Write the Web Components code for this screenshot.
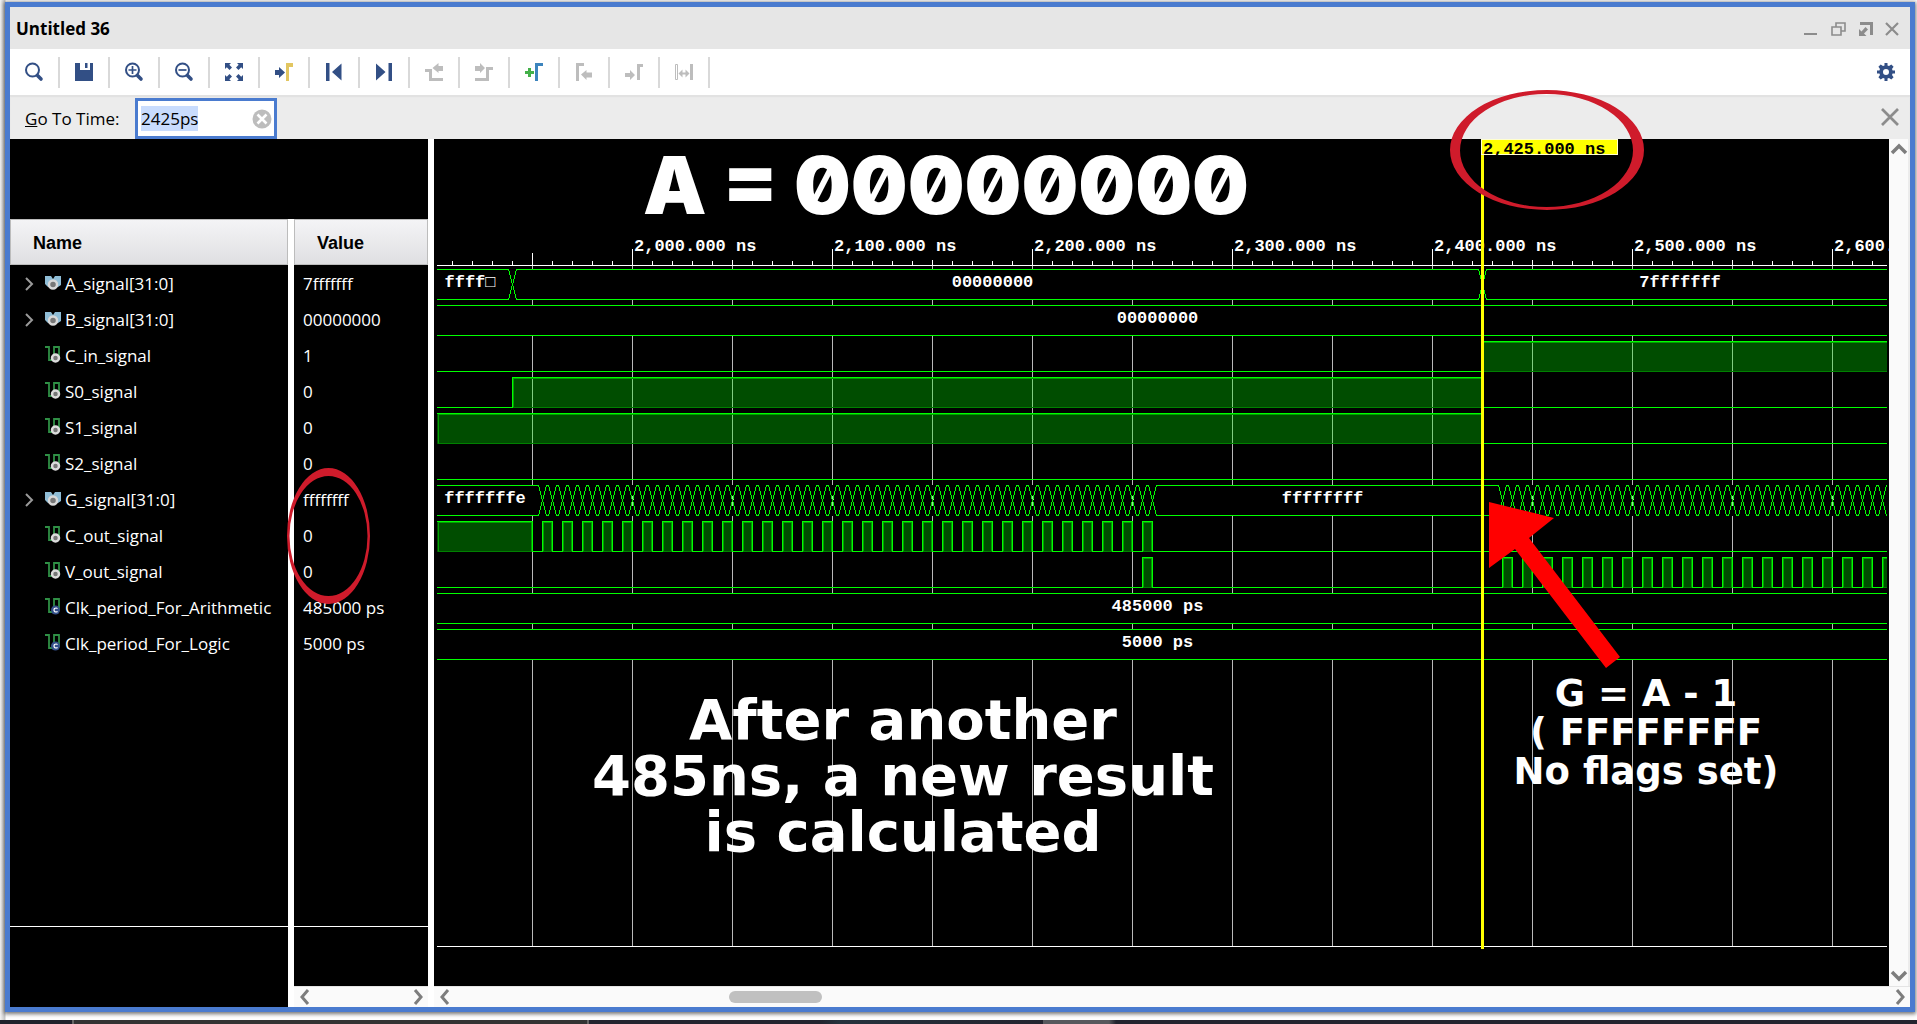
<!DOCTYPE html>
<html lang="en">
<head>
<meta charset="utf-8">
<title>Untitled 36</title>
<style>
  html, body { height: 100%; }
  body { margin: 0; font-family: "Open Sans", "Noto Sans", sans-serif; font-size: 17px; color: #000; }
</style>
</head>
<body>
<sim-desktop>
  <sim-window heading="Untitled 36">
    <sim-toolbar slot="toolbar"></sim-toolbar>
    <goto-bar slot="goto" value="2425ps"></goto-bar>
    <signal-table></signal-table>
    <wave-view></wave-view>
  </sim-window>
  <note-layer slot="notes"></note-layer>
</sim-desktop>

<script>
const define = (name, html, setup) => {
  const tpl = document.createElement('template');
  tpl.innerHTML = html;
  customElements.define(name, class extends HTMLElement {
    connectedCallback() {
      if (this.shadowRoot) return;
      const root = this.attachShadow({ mode: 'open' });
      root.append(tpl.content.cloneNode(true));
      if (setup) setup(this, root);
    }
  });
};

/* ---------- icons ---------- */
const N = '#324f85', G = '#bdbdbd', W = '#8c8c8c';
const lens = `<circle cx="8.500" cy="8" r="6.500" fill="none" stroke="${N}" stroke-width="2"/><path d="M13.500 13.500l3.500 3.500" stroke="${N}" stroke-width="3.600" stroke-linecap="round"/>`;
const ICONS = {
  search: lens,
  save: `<path fill="${N}" d="M1 1h5v7h10V1h3v18H1zM11 1h2.500v5H11z"/>`,
  zoomin: lens + `<path d="M4.500 8h8M8.500 4v8" stroke="${N}" stroke-width="1.700"/>`,
  zoomout: lens + `<path d="M4.500 8h8" stroke="${N}" stroke-width="1.700"/>`,
  fit: `<g fill="${N}"><path d="M1 1h6L5.300 2.800 8 5.500 5.500 8 2.800 5.300 1 7z"/><path d="M19 1h-6l1.700 1.800L12 5.500 14.500 8l2.700-2.700L19 7z"/><path d="M1 19h6l-1.700-1.800L8 14.500 5.500 12l-2.700 2.700L1 13z"/><path d="M19 19h-6l1.700-1.800-2.700-2.700 2.500-2.500 2.700 2.700L19 13z"/></g><path d="M1 10h18M10 1v18" stroke="#fff" stroke-width="2"/>`,
  cursor: `<path fill="${N}" d="M1 8h4V5l6 5.500L5 16v-3H1z"/><path fill="#e2c661" d="M12 1h7v4h-4v14h-3z"/>`,
  prev: `<path fill="${N}" d="M2 1h3.500v18H2zM17.500 1.500v17L8 10z"/>`,
  next: `<path fill="${N}" d="M18 1h-3.500v18H18zM2 1.500v17L11.500 10z"/>`,
  prevedge: `<path fill="${G}" d="M1 7h7v9h11v3H5v-9H1zM8.500 6l6-5v3H19v5h-4.500v2z"/>`,
  nextedge: `<path fill="${G}" d="M19 5h-7v11H1v3h14V8h4zM11 6L6 1v3H1v5h5v2z"/>`,
  add: `<path fill="#43b049" d="M1 9h3V6h3v3h3v3H7v3H4v-3H1z"/><path fill="#3c84bd" d="M11 1h8v3h-5v15h-3z"/>`,
  prevmark: `<path fill="${G}" d="M2 1h8v3H5v15H2zM7 12.500L12.500 8v2.500H18v5h-5.500V18z"/>`,
  nextmark: `<path fill="${G}" d="M19 2h-6v16h3V5h3zM11 13L6 8v3H1v4h5v3z"/>`,
  swap: `<path fill="none" stroke="${G}" d="M1.500 2.500h2v15h-2z"/><path fill="${G}" d="M16 2h3v16h-3zM4.500 11.500l4-4v3h3v-3l4 4-4 4v-3h-3v3z"/>`,
  gear: `<path fill="${N}" fill-rule="evenodd" d="M8.500 1h3v2.500l1.500.6 2.300-1.700 2.300 2.300L16 7l.6 1.500H19v3h-2.400L16 13l1.600 2.300-2.300 2.300L13 16l-1.500.6V19h-3v-2.400L7 16l-2.300 1.600-2.300-2.300L4 13l-.6-1.500H1v-3h2.400L4 7 2.400 4.700l2.300-2.300L7 4.100l1.500-.6zM10 7a3 3 0 1 0 0 6 3 3 0 0 0 0-6z"/>`,
  min: `<path fill="${W}" d="M3 14h13v2H3z"/>`,
  restore: `<path fill="none" stroke="${W}" stroke-width="1.600" d="M8 8V4h9v8h-4M4 8h9v8H4z"/>`,
  float: `<path fill="${W}" d="M5 3h13v13h-3V6H5zM4 17V10l2.500 2.500L10.500 8l2.500 2.500L9 14.500 11.500 17z"/>`,
  close: `<path stroke="${W}" stroke-width="2.200" d="M4 4l12 12M16 4L4 16"/>`,
  bigclose: `<path stroke="${W}" stroke-width="2.700" d="M2 2l16 16M18 2L2 18"/>`,
  clear: `<circle cx="10" cy="10" r="9.500" fill="#bdbdbd"/><path stroke="#fff" stroke-width="2.600" d="M5.500 5.500l9 9M14.500 5.500l-9 9"/>`,
  left: `<path fill="none" stroke="#7d7d7d" stroke-width="3" d="M14 3l-6 7 6 7"/>`,
  right: `<path fill="none" stroke="#7d7d7d" stroke-width="3" d="M7 3l6 7-6 7"/>`,
  up: `<path fill="none" stroke="#7d7d7d" stroke-width="3.500" d="M3 14l7-7 7 7"/>`,
  down: `<path fill="none" stroke="#7d7d7d" stroke-width="3.500" d="M3 6l7 7 7-7"/>`,
  expand: `<path fill="none" stroke="#9a9a9a" stroke-width="2" d="M7 4l6 6-6 6"/>`,
  bus: `<path fill="#8fbdd6" d="M2 2h6l2 3 2-3h6v9l-3 2H5l-3-3z"/><circle cx="10" cy="10.500" r="4" fill="#777" stroke="#d8d8d8" stroke-width="2.500"/>`,
  wire: `<path fill="none" stroke="#2f8f45" stroke-width="1.800" d="M2 1h4v13h5V1h5v12"/><circle cx="12.500" cy="12" r="3.500" fill="#777" stroke="#dcdcdc" stroke-width="2.500"/>`,
  param: `<path fill="none" stroke="#2f8f45" stroke-width="1.800" d="M2 1h4v13h5V1h5v12"/><circle cx="12.500" cy="12" r="4.500" fill="#34508a"/><path fill="none" stroke="#fff" stroke-width="1.200" d="M14.500 10.700a2 2 0 1 0 0 2.600"/>`
};
define('sim-icon', `<style>:host{display:block;width:20px;height:20px;flex:none}svg{display:block}</style>`,
  (el, root) => {
    root.innerHTML += `<svg width="20" height="20" viewBox="0 0 20 20" aria-hidden="true">${ICONS[el.getAttribute('name')]}</svg>`;
  });

/* ---------- shell ---------- */
define('sim-desktop', `<style>
  :host{display:flex;flex-direction:column;height:100vh;box-sizing:border-box;position:relative;overflow:hidden;
    background:linear-gradient(90deg,#f4f4f4,#c4c4c4 5px,#fff 6px)}
  main{flex:1;min-height:0;display:flex;flex-direction:column;padding:2px 2px 8px 5px}
  footer{height:4px;background:linear-gradient(90deg,#1f212b 72px,#666 72px 74px,#333 74px 587px,#666 587px 589px,#23242f 589px 820px,#25323d 840px,#23242f 1043px,#57585d 1043px 1109px,#23242f 1116px)}
</style><main><slot></slot></main><footer></footer><slot name="notes"></slot>`);

define('sim-window', `<style>
  :host{flex:1;min-height:0;display:flex;flex-direction:column;border:5px solid #4a7bcf;background:#fff;
    box-shadow:0 1px 4px 1px rgba(0,0,0,.55)}
  header{display:flex;align-items:center;gap:7px;box-sizing:border-box;height:42px;padding:2px 8px 0 6px;background:#e6e6e6}
  h1{flex:1;margin:0;font-size:17px;line-height:24px;font-weight:700}
  button{border:0;padding:0;background:none;width:20px;height:20px}
  section{flex:1;min-height:0;display:flex}
</style><header><h1></h1>
<button aria-label="Minimize"><sim-icon name="min"></sim-icon></button>
<button aria-label="Restore"><sim-icon name="restore"></sim-icon></button>
<button aria-label="Float"><sim-icon name="float"></sim-icon></button>
<button aria-label="Close"><sim-icon name="close"></sim-icon></button>
</header><slot name="toolbar"></slot><slot name="goto"></slot><section><slot></slot></section>`,
  (el, root) => { root.querySelector('h1').textContent = el.getAttribute('heading'); });

const TOOLS = [['search','Find'],['save','Save'],['zoomin','Zoom In'],['zoomout','Zoom Out'],['fit','Zoom Fit'],
  ['cursor','Go to Cursor'],['prev','Go to Time 0'],['next','Go to Last Time'],['prevedge','Previous Transition'],
  ['nextedge','Next Transition'],['add','Add Marker'],['prevmark','Previous Marker'],['nextmark','Next Marker'],['swap','Swap Cursors']];
define('sim-toolbar', `<style>
  :host{display:flex;align-items:center;height:46px;background:#fff}
  button{border:0;background:none;padding:0;height:31px;width:50px;display:flex;justify-content:center;align-items:center;border-right:2px solid #d9d9d9}
  span{flex:1} .gear{border:0;width:48px}
</style>${TOOLS.map(([i, t]) => `<button aria-label="${t}"><sim-icon name="${i}"></sim-icon></button>`).join('')}
<span></span><button class="gear" aria-label="Settings"><sim-icon name="gear"></sim-icon></button>`);

define('goto-bar', `<style>
  :host{display:flex;align-items:center;height:44px;background:#ececec;box-shadow:inset 0 2px 1px #e2e2e2}
  label{width:110px;padding:3px 0 0 15px;line-height:24px;font-size:17px}
  .box{display:flex;align-items:center;align-self:flex-end;box-sizing:border-box;width:142px;height:41px;border:3px solid #4a7bcf;background:#fff;padding:0 2px 0 3px}
  input{flex:1;min-width:0;border:0;outline:0;padding:0;margin:0;background:none;font:inherit;color:#000;height:25px;line-height:25px}
  input::selection{background:#c9dcfd;color:#000}
  button{border:0;background:none;padding:0;width:20px;height:20px}
  span{flex:1} .end{margin-right:10px}
</style><label for="t"><u>G</u>o To Time:</label><div class="box"><input id="t" type="text" spellcheck="false"><button aria-label="Clear"><sim-icon name="clear"></sim-icon></button></div>
<span></span><button class="end" aria-label="Close"><sim-icon name="bigclose"></sim-icon></button>`,
  (el, root) => {
    const input = root.querySelector('input');
    input.value = el.getAttribute('value');
    input.focus(); input.select();
  });

define('scroll-bar', `<style>
  :host{display:flex;align-items:center;justify-content:space-between;box-sizing:border-box;height:21px;background:#fafafa;border-top:1px solid #e4e4e4}
  :host([vertical]){flex-direction:column;width:21px;height:auto;border-top:0;border-right:2px solid #ececec;padding:0}
  button{border:0;background:none;padding:0;width:20px;height:20px}
  i{display:block;flex:1;height:12px}
  b{display:block;margin-left:275px;width:93px;height:12px;border-radius:6px;background:#c0c0c0}
</style><button></button><i></i><button></button>`,
  (el, root) => {
    const v = el.hasAttribute('vertical');
    const [a, b] = root.querySelectorAll('button');
    a.innerHTML = `<sim-icon name="${v ? 'up' : 'left'}"></sim-icon>`;
    b.innerHTML = `<sim-icon name="${v ? 'down' : 'right'}"></sim-icon>`;
    a.setAttribute('aria-label', v ? 'Scroll up' : 'Scroll left');
    b.setAttribute('aria-label', v ? 'Scroll down' : 'Scroll right');
    if (el.hasAttribute('thumb')) root.querySelector('i').innerHTML = '<b></b>';
  });

/* ---------- signal list ---------- */
const SIGNALS = [['bus','A_signal[31:0]','7fffffff'],['bus','B_signal[31:0]','00000000'],['wire','C_in_signal','1'],
  ['wire','S0_signal','0'],['wire','S1_signal','0'],['wire','S2_signal','0'],['bus','G_signal[31:0]','ffffffff'],
  ['wire','C_out_signal','0'],['wire','V_out_signal','0'],['param','Clk_period_For_Arithmetic','485000 ps'],['param','Clk_period_For_Logic','5000 ps']];
define('signal-table', `<style>
  :host{flex:none;width:418px;box-sizing:border-box;padding-top:80px;background:#000;display:flex;flex-direction:column}
  .cols{flex:1;display:flex;flex-direction:column;background:linear-gradient(90deg,transparent 278px,#fff 278px 284px,transparent 284px)}
  table{border-collapse:separate;border-spacing:0;table-layout:fixed;width:418px;color:#fff}
  th{box-sizing:border-box;height:46px;padding:0;text-align:left;font:700 18px "Liberation Sans",Arial,sans-serif;color:#000}
  th span{display:block;box-sizing:border-box;height:46px;line-height:46px;padding-left:22px;border:1px solid #bcbcbc;background:linear-gradient(#f4f4f6,#dfdfe2)}
  th:first-child{width:284px;border-right:6px solid #fff}
  td{height:36px;padding:0;line-height:24px;font-size:17px}
  td:first-child{border-right:6px solid #fff}
  td:last-child{padding-left:9px}
  tbody::before{content:"";display:block;height:1px}
  .n{display:flex;align-items:center;padding-left:9px}
  .n button,.n i{width:20px;height:20px;margin-right:4px;border:0;padding:0;background:none}
  .n span{margin-left:2px}
  .fill{flex:1;border-bottom:1px solid #fff;display:flex}
  .foot{height:80px;display:flex;align-items:flex-end}
  .foot scroll-bar{width:134px;margin-left:284px}
</style><div class="cols"><table><thead><tr><th><span>Name</span></th><th><span>Value</span></th></tr></thead><tbody>
${SIGNALS.map(([k, n, v]) => `<tr><td><div class="n">${k === 'bus' ? `<button aria-label="Expand"><sim-icon name="expand"></sim-icon></button>` : '<i></i>'}<sim-icon name="${k}"></sim-icon><span>${n}</span></div></td><td>${v}</td></tr>`).join('')}
</tbody></table><div class="fill"></div><div class="foot"><scroll-bar></scroll-bar></div></div>`);

/* ---------- waveforms: 2px per ns, view starts at 1902.5 ns ---------- */
const X = t => (t - 1902.5) * 2;
const END = 3200;
const range = (a, b, s) => { const r = []; for (let t = a; t <= b; t += s) r.push(t); return r; };
const busSvg = (times) => {
  let s = `<rect x="0" y="0" width="${X(END)}" height="31" fill="#000"/>`;
  let a = 'M0 0.5', b = 'M0 30.5', up = true;
  for (const t of times) {
    const x = X(t) + .5, p = up ? '.5' : '30.5', q = up ? '30.5' : '.5';
    a += `L${x - 4} ${p}L${x - 2} ${up ? 8 : 23}L${x + 2} ${up ? 23 : 8}L${x + 4} ${q}`;
    b += `L${x - 4} ${q}L${x - 2} ${up ? 23 : 8}L${x + 2} ${up ? 8 : 23}L${x + 4} ${p}`;
    up = !up;
    if (times.length > 5 && t % 50 === 0) s += `<path d="M${x - .5} 11v3h1v-3zM${x - .5} 17v3h1v-3z" fill="#b9b9b9" stroke="#b9b9b9"/>`;
  }
  a += `L${X(END)} ${up ? .5 : 30.5}`; b += `L${X(END)} ${up ? 30.5 : .5}`;
  return s + `<path d="${a}${b}" fill="none" stroke="#0f0" shape-rendering="crispEdges"/>`;
};
const bitSvg = (highs) => {
  let fills = '', line = '', p = 0;
  for (const [t0, t1] of highs) {
    const x0 = Math.max(X(t0), 0), x1 = X(t1);
    fills += `<rect x="${x0}" y="1" width="${x1 - x0}" height="30" fill="rgba(0,255,0,.3)"/>`
      + `<path d="M${x0 + 1.5} 30V1.500H${x1 - .5}V30" fill="none" stroke="#00a000"/>`
      + `<path d="M${x0 + 1} 30.500H${x1}" stroke="#008000"/>`;
    if (x0 > p) line += `M${p} 30.500H${x0}`;
    line += `M${x0 + .5} ${x0 ? 31 : 1}V.5H${x1 + .5}V31`;
    p = x1;
  }
  line += `M${p} 30.500H${X(END)}`;
  return fills + `<path d="${line}" fill="none" stroke="#0f0"/>`;
};
define('wave-lane', `<style>
  :host{display:flex;position:relative;height:36px;overflow:hidden}
  svg{position:absolute;left:0;top:0}
  span{position:relative;box-sizing:border-box;flex:none;padding-right:9px;text-align:center;color:#fff;
    font:700 17px/28px "Liberation Mono","DejaVu Sans Mono",monospace;white-space:nowrap}
  span:last-child{flex:1}
</style>`, (el, root) => {
  const { times, highs, labels = [] } = el.data;
  root.innerHTML += `<svg width="3000" height="31" shape-rendering="crispEdges">${times ? busSvg(times) : bitSvg(highs)}</svg>`
    + labels.map(([w, t]) => `<span style="width:${w}px">${t}</span>`).join('');
});
const LANES = [
  { times: [1940, 2425], labels: [[75, 'ffff□'], [970, '00000000'], [0, '7fffffff']] },
  { times: [], labels: [[0, '00000000']] },
  { highs: [[2425, END]] },
  { highs: [[1940, 2425]] },
  { highs: [[1900, 2425]] },
  { highs: [] },
  { times: [...range(1955, 2260, 5), ...range(2435, 2800, 5)], labels: [[105, 'fffffffe'], [610, ''], [350, 'ffffffff'], [0, '']] },
  { highs: [[1900, 1950], ...range(1955, 2255, 10).map(t => [t, t + 5])] },
  { highs: [[2255, 2260], ...range(2435, 2800, 10).map(t => [t, t + 5])] },
  { times: [], labels: [[0, '485000 ps']] },
  { times: [], labels: [[0, '5000 ps']] }
];
const ticks = range(1910, 2900, 10).map(t => {
  const y = t === 1950 ? 4 : (t % 100 === 0 ? 0 : 12);
  return `M${X(t) + .5} ${y}V17`;
}).join('') + range(2050, 2850, 100).map(t => `M${X(t) + .5} 11V17`).join('');
define('wave-view', `<style>
  :host{flex:1;min-width:0;display:grid;grid-template-columns:minmax(0,1fr) 21px;grid-template-rows:minmax(0,1fr) 21px;border-left:6px solid #fff;background:#fafafa}
  .canvas{position:relative;background:#000;overflow:hidden;display:flex;flex-direction:column;padding:0 2px 39px 3px}
  .ruler{height:127px;flex:none;display:flex;flex-direction:column;justify-content:flex-end;position:relative}
  .labels{display:flex;padding-left:197px;height:20px;margin-bottom:9px}
  .labels span{flex:none;width:200px;white-space:nowrap;color:#fff;font:700 17px/20px "Liberation Mono","DejaVu Sans Mono",monospace}
  .ticks{position:absolute;left:0;bottom:0;width:100%;height:17px;overflow:hidden}
  .lanes{flex:1;min-height:0;overflow:hidden;padding-top:3px;border-bottom:1px solid #fff;
    background:linear-gradient(90deg,#b9b9b9 1px,transparent 1px) 95px 0/100px 100%}
  .cursor{position:absolute;left:1047px;top:0;bottom:37px;width:3px;background:#ff0}
  .cursor output{position:absolute;left:0;top:0;box-sizing:border-box;width:137px;height:16px;padding-left:1px;background:#ff0;border:1px solid #ffffd0;
    color:#000;font:700 17px/20px "Liberation Mono","DejaVu Sans Mono",monospace;white-space:nowrap}
</style>
<div class="canvas"><div class="ruler"><div class="labels">${range(2000, 2600, 100).map(t => `<span>${t.toLocaleString('en-US')}.000 ns</span>`).join('')}</div>
<svg class="ticks" shape-rendering="crispEdges"><path d="${ticks}M0 16.500H3000" stroke="#fff" fill="none"/></svg></div>
<div class="lanes"></div><div class="cursor"><output>2,425.000 ns</output></div></div>
<scroll-bar vertical></scroll-bar><scroll-bar thumb style="grid-column:1/-1"></scroll-bar>`,
  (el, root) => {
    const box = root.querySelector('.lanes');
    for (const data of LANES) {
      const lane = document.createElement('wave-lane');
      lane.data = data;
      box.append(lane);
    }
  });

/* ---------- annotations drawn over the window ---------- */
define('note-layer', `<style>
  :host{position:absolute;inset:0;pointer-events:none;color:#fff;font-family:"DejaVu Sans",sans-serif;font-weight:700;text-align:center}
  svg{position:absolute;inset:0}
  p{position:absolute;margin:0;white-space:nowrap}
  .a{left:626px;top:139px;width:640px;font:900 80px/92px Inter,"DejaVu Sans",sans-serif;font-feature-settings:"zero"}
  .b{left:583px;top:692px;width:640px;font-size:56px;line-height:56px}
  .c{left:1496px;top:674px;width:300px;font-size:37px;line-height:39px}
</style>
<p class="a">A = 00000000</p>
<p class="b">After another<br>485ns, a new result<br>is calculated</p>
<p class="c">G = A - 1<br>( FFFFFFFF<br>No flags set)</p>
<svg width="100%" height="100%">
<path fill="#cf1b2b" fill-rule="evenodd" d="M1450 150a97 60 0 1 0 194 0a97 60 0 1 0-194 0zM1460 150.500a86.500 56.500 0 1 0 173 0a86.500 56.500 0 1 0-173 0z"/>
<path fill="#cf1b2b" fill-rule="evenodd" d="M287 536a41.500 68 0 1 0 83 0a41.500 68 0 1 0-83 0zM289.500 536a39 60 0 1 0 78 0a39 60 0 1 0-78 0z"/>
<path fill="#f00" d="M1489 502l65 16-25 20 91 119-14 11-91-119-26 19z"/>
</svg>`);
</script>
</body>
</html>
